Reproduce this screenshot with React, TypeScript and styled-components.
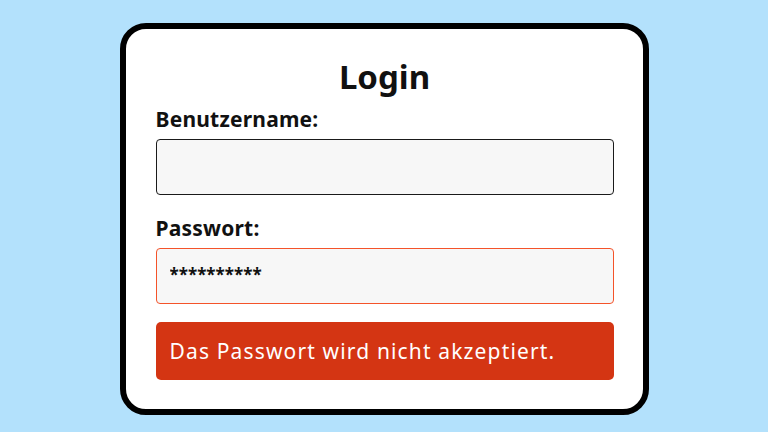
import React from 'react';
import styled, { createGlobalStyle } from 'styled-components';

const GlobalStyle = createGlobalStyle`
  html, body {
    margin: 0;
    padding: 0;
  }
  body {
    background: #b3e1fc;
    font-family: 'Noto Sans', 'Open Sans', sans-serif;
  }
`;

const Page = styled.main`
  width: 768px;
  height: 432px;
  display: flex;
  justify-content: center;
  align-items: flex-start;
  padding-top: 23px;
  box-sizing: border-box;
`;

const Card = styled.form`
  width: 529px;
  height: 392px;
  box-sizing: border-box;
  background: #ffffff;
  border: 6px solid #000;
  border-radius: 26px;
  padding: 26px 29px 0 30px;
  display: flex;
  flex-direction: column;
`;

const Title = styled.h1`
  margin: 0;
  text-align: center;
  font-size: 33px;
  line-height: 44px;
  font-weight: 700;
  color: #111;
`;

const Label = styled.label<{ $mt: number }>`
  font-size: 21px;
  font-weight: 700;
  line-height: 26px;
  letter-spacing: 0.2px;
  color: #111;
  margin-top: ${(p) => p.$mt}px;
`;

const Input = styled.input<{ $error?: boolean }>`
  margin-top: 7px;
  height: 56px;
  box-sizing: border-box;
  background: #f7f7f7;
  border: 1.5px solid ${(p) => (p.$error ? '#f4532a' : '#1a1a1a')};
  border-radius: 4px;
  padding: 0 13px 4px;
  font-family: inherit;
  font-size: 17px;
  font-weight: 700;
  color: #111;
  outline: none;
`;

const ErrorBox = styled.div`
  margin-top: 18px;
  height: 58px;
  background: #d43513;
  border-radius: 5px;
  color: #fff;
  display: flex;
  align-items: center;
  padding: 0 14px;
  font-size: 21px;
  letter-spacing: 1.15px;
`;

export default function App() {
  return (
    <>
      <GlobalStyle />
      <Page>
        <Card onSubmit={(e) => e.preventDefault()}>
          <Title>Login</Title>
          <Label $mt={7} htmlFor="user">Benutzername:</Label>
          <Input id="user" type="text" />
          <Label $mt={20} htmlFor="pw">Passwort:</Label>
          <Input id="pw" type="text" $error defaultValue="**********" />
          <ErrorBox>Das Passwort wird nicht akzeptiert.</ErrorBox>
        </Card>
      </Page>
    </>
  );
}
